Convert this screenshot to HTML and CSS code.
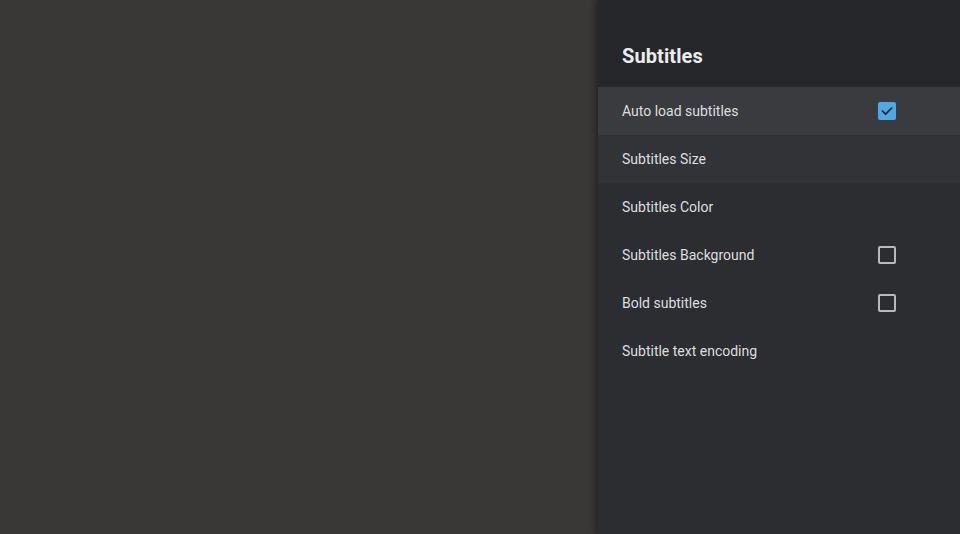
FILE: index.html
```html
<!DOCTYPE html>
<html>
<head>
<meta charset="utf-8">
<link rel="stylesheet" href="styles.css">
</head>
<body>
<div class="screen">
  <div class="backdrop"></div>
  <aside class="panel">
    <header class="panel-header"><h1 class="title">Subtitles</h1></header>
    <ul class="list">
      <li class="row row-focused"><span class="label">Auto load subtitles</span>
        <span class="check checked"><svg viewBox="0 0 18 18" width="18" height="18"><path d="M4.5 9.2 L7.6 12.2 L13.6 6.2" fill="none" stroke="#1f2a36" stroke-width="1.8" stroke-linecap="round" stroke-linejoin="round"/></svg></span></li>
      <li class="row row-hover"><span class="label">Subtitles Size</span></li>
      <li class="row"><span class="label">Subtitles Color</span></li>
      <li class="row"><span class="label">Subtitles Background</span><span class="check"></span></li>
      <li class="row"><span class="label">Bold subtitles</span><span class="check"></span></li>
      <li class="row"><span class="label">Subtitle text encoding</span></li>
    </ul>
  </aside>
</div>
</body>
</html>
```
FILE: styles.css
```css
html, body { margin: 0; padding: 0; }
body { width: 960px; height: 534px; overflow: hidden; font-family: Roboto, "Liberation Sans", sans-serif; }
.screen { display: flex; width: 960px; height: 534px; }
.backdrop { flex: 0 0 598px; background: #393836; }
.panel { flex: 1; background: #2c2d31; box-shadow: -3px 0 6px rgba(0,0,0,0.35); position: relative; }
.panel-header { height: 87px; background: #26272a; display: flex; align-items: center; padding-left: 24px; padding-top: 25px; box-sizing: border-box; }
.title { margin: 0; font-size: 20px; font-weight: 700; color: #ececec; letter-spacing: 0.1px; }
.list { list-style: none; margin: 0; padding: 0; }
.row { height: 48px; display: flex; align-items: center; justify-content: space-between; padding: 0 64px 0 24px; font-size: 14px; color: #dedede; }
.row-focused { background: #3a3b3f; }
.row-hover { background: #323337; }
.check { width: 14px; height: 14px; border: 2px solid #b9b9b9; border-radius: 2px; display: block; }
.check.checked { border: none; width: 18px; height: 18px; background: #4ea8e4; }
.check svg { display: block; }
```
